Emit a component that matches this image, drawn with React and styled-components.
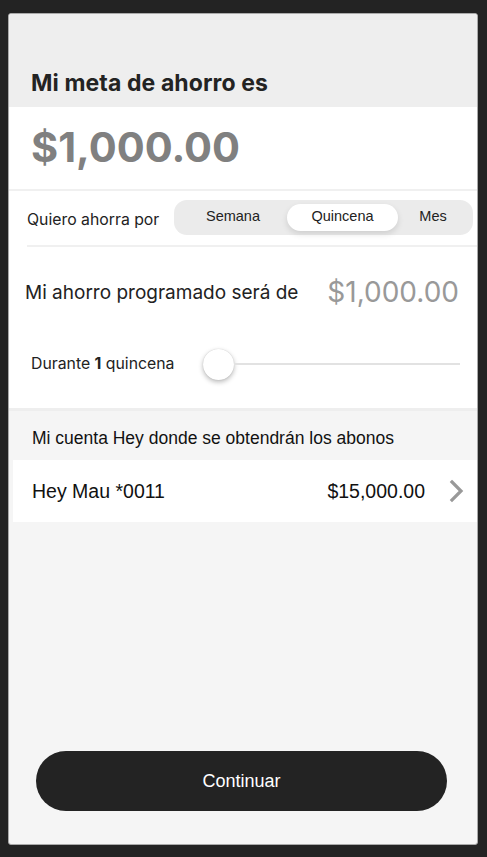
import styled, { createGlobalStyle } from "styled-components"

const GlobalStyle = createGlobalStyle`
  html, body {
    margin: 0;
    padding: 0;
    background: #232323;
  }
  body {
    padding: 13px 9px 12px 8px;
  }
`

const periods = ["Semana", "Quincena", "Mes"]

const App = () => {
  const selected = "Quincena"

  return (
    <>
      <GlobalStyle />
      <Phone>
        <Header>
          <Title>Mi meta de ahorro es</Title>
        </Header>

        <Card>
          <GoalAmount>$1,000.00</GoalAmount>
          <Divider />
          <PeriodRow>
            <RowLabel>Quiero ahorra por</RowLabel>
            <Segmented>
              {periods.map((p) => (
                <Segment key={p} $active={p === selected}>{p}</Segment>
              ))}
            </Segmented>
          </PeriodRow>
          <Divider $inset />
          <ScheduleRow>
            <ScheduleLabel>Mi ahorro programado será de</ScheduleLabel>
            <ScheduleAmount>$1,000.00</ScheduleAmount>
          </ScheduleRow>
          <SliderRow>
            <SliderLabel>Durante <b>1</b> quincena</SliderLabel>
            <Slider>
              <Thumb />
              <Track />
            </Slider>
          </SliderRow>
        </Card>

        <SectionLabel>Mi cuenta Hey donde se obtendrán los abonos</SectionLabel>
        <AccountRow>
          <AccountName>Hey Mau *0011</AccountName>
          <AccountBalance>$15,000.00</AccountBalance>
          <Chevron viewBox="0 0 16 24" width="16" height="24">
            <path d="M3 3 L12 12 L3 21" fill="none" stroke="#999" strokeWidth="3.2" strokeLinecap="square" />
          </Chevron>
        </AccountRow>

        <Footer>
          <PrimaryButton>Continuar</PrimaryButton>
        </Footer>
      </Phone>
    </>
  )
}

export default App

const Phone = styled.div`
  width: 468px;
  height: 830px;
  background: #f5f5f5;
  border: 1px solid #a9a9a9;
  border-radius: 3px;
  display: flex;
  flex-direction: column;
  overflow: hidden;
  font-family: Inter, "Liberation Sans", sans-serif;
`

const Header = styled.div`
  height: 93px;
  background: #eeeeee;
  display: flex;
  align-items: flex-end;
  padding: 0 22px 10px;
  box-sizing: border-box;
`

const Title = styled.h1`
  margin: 0;
  font-size: 23px;
  font-weight: 700;
  color: #232323;
  letter-spacing: 0.1px;
`

const Card = styled.div`
  background: #fff;
  border-bottom: 3px solid #eeeeee;
`

const GoalAmount = styled.div`
  height: 82px;
  display: flex;
  align-items: center;
  padding: 0 22px 2px;
  font-size: 41.5px;
  font-weight: 700;
  color: #808080;
  box-sizing: border-box;
`

const Divider = styled.div`
  height: 2px;
  background: #f0f0f0;
  margin-left: ${({ $inset }) => ($inset ? "18px" : "0")};
`

const PeriodRow = styled.div`
  display: flex;
  align-items: center;
  justify-content: space-between;
  height: 54px;
  padding: 0 4px 0 18px;
`

const RowLabel = styled.span`
  font-size: 15.8px;
  color: #222;
  padding-top: 3px;
`

const Segmented = styled.div`
  display: grid;
  grid-template-columns: 108px 111px 70px;
  padding: 4px 5px;
  background: #ebebeb;
  border-radius: 13px;
  margin-top: -1px;
`

const Segment = styled.div`
  height: 27px;
  display: flex;
  align-items: center;
  justify-content: center;
  font-family: "Liberation Sans", Arial, sans-serif;
  font-size: 14.5px;
  color: #222;
  padding-bottom: 4px;
  box-sizing: border-box;
  border-radius: 14px;
  background: ${({ $active }) => ($active ? "#fff" : "transparent")};
  box-shadow: ${({ $active }) => ($active ? "0 3px 6px rgba(0,0,0,0.12)" : "none")};
`

const ScheduleRow = styled.div`
  display: flex;
  align-items: center;
  justify-content: space-between;
  height: 90px;
  padding: 0 18px 0 16px;
`

const ScheduleLabel = styled.span`
  font-size: 19px;
  color: #222;
`

const ScheduleAmount = styled.span`
  font-size: 28px;
  color: #999;
`

const SliderRow = styled.div`
  display: flex;
  align-items: center;
  height: 53px;
  padding: 0 17px 18px 22px;
`

const SliderLabel = styled.span`
  font-size: 15.8px;
  color: #222;
  margin-right: 29px;

  b {
    font-weight: 700;
  }
`

const Slider = styled.div`
  flex: 1;
  display: flex;
  align-items: center;
  padding-top: 1px;
`

const Thumb = styled.div`
  width: 31px;
  height: 31px;
  border-radius: 50%;
  background: #fff;
  box-shadow: 0 2px 5px rgba(0,0,0,0.28), 0 0 1px rgba(0,0,0,0.2);
  flex-shrink: 0;
`

const Track = styled.div`
  flex: 1;
  height: 2px;
  background: #e2e2e2;
`

const SectionLabel = styled.div`
  font-family: "Liberation Sans", Arial, sans-serif;
  font-size: 17.5px;
  color: #111;
  padding: 17px 0 11px 23px;
`

const AccountRow = styled.div`
  display: flex;
  align-items: center;
  height: 62px;
  margin-left: 4px;
  padding: 0 12px 0 19px;
  background: #fff;
  font-family: "Liberation Sans", Arial, sans-serif;
  font-size: 19.5px;
  color: #111;
`

const AccountName = styled.span`
  flex: 1;
`

const AccountBalance = styled.span`
  margin-right: 24px;
`

const Chevron = styled.svg`
  display: block;
`

const Footer = styled.div`
  margin-top: auto;
  padding: 0 30px 33px 27px;
`

const PrimaryButton = styled.button`
  width: 100%;
  height: 60px;
  border: none;
  border-radius: 30px;
  background: #232323;
  color: #fff;
  font-family: "Liberation Sans", Arial, sans-serif;
  font-size: 18px;
  cursor: pointer;
`
